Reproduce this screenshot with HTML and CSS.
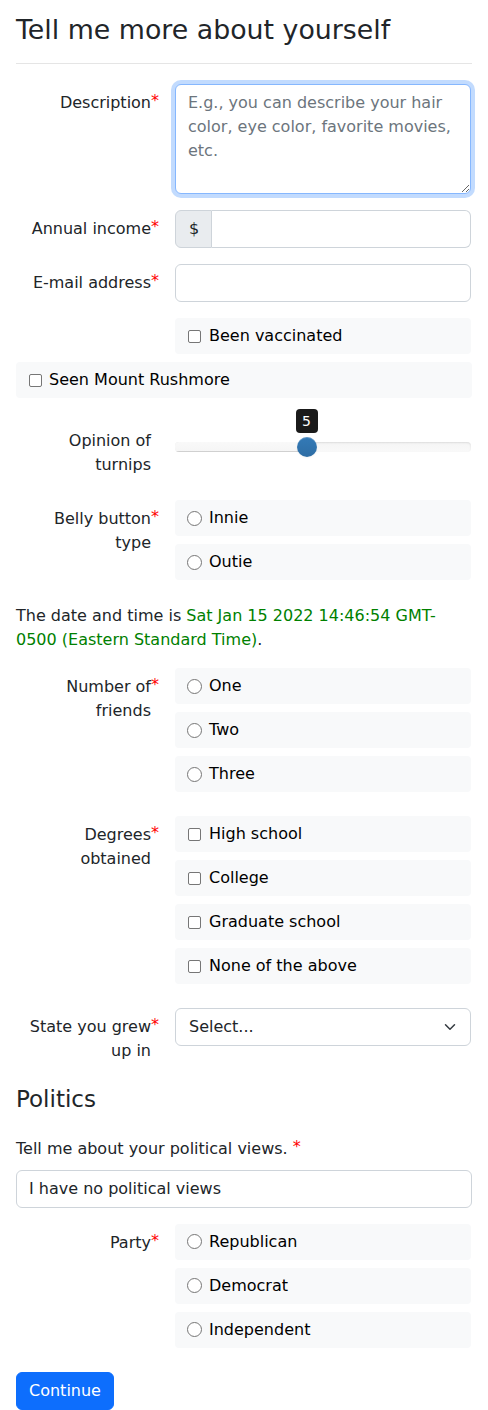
FILE: index.html
```html
<!DOCTYPE html>
<html lang="en">
<head>
<meta charset="utf-8">
<title>Tell me more about yourself</title>
<link rel="stylesheet" href="styles.css">
</head>
<body>
<div class="page">
  <h1 class="title">Tell me more about yourself</h1>
  <hr class="rule">

  <div class="field">
    <label class="flabel">Description<span class="req">*</span></label>
    <div class="fctl">
      <textarea class="textarea" placeholder="E.g., you can describe your hair color, eye color, favorite movies, etc."></textarea>
    </div>
  </div>

  <div class="field">
    <label class="flabel">Annual income<span class="req">*</span></label>
    <div class="fctl">
      <div class="igroup"><span class="iaddon">$</span><input class="input input-grp" type="text"></div>
    </div>
  </div>

  <div class="field">
    <label class="flabel">E-mail address<span class="req">*</span></label>
    <div class="fctl"><input class="input" type="text"></div>
  </div>

  <div class="field field-tight">
    <div class="flabel flabel-empty"></div>
    <div class="fctl">
      <label class="choice"><input class="cb" type="checkbox"><span>Been vaccinated</span></label>
    </div>
  </div>

  <div class="wide">
    <label class="choice"><input class="cb" type="checkbox"><span>Seen Mount Rushmore</span></label>
  </div>

  <div class="field">
    <label class="flabel">Opinion of turnips</label>
    <div class="fctl">
      <div class="slider">
        <div class="track"><div class="selection"></div></div>
        <div class="handle"></div>
        <div class="tip">5</div>
      </div>
    </div>
  </div>

  <div class="field">
    <label class="flabel">Belly button<span class="req">*</span> type</label>
    <div class="fctl">
      <label class="choice"><input class="rd" type="radio" name="belly"><span>Innie</span></label>
      <label class="choice"><input class="rd" type="radio" name="belly"><span>Outie</span></label>
    </div>
  </div>

  <p class="note">The date and time is <span class="green">Sat Jan 15 2022 14:46:54 GMT-0500 (Eastern Standard Time)</span>.</p>

  <div class="field">
    <label class="flabel">Number of<span class="req">*</span> friends</label>
    <div class="fctl">
      <label class="choice"><input class="rd" type="radio" name="friends"><span>One</span></label>
      <label class="choice"><input class="rd" type="radio" name="friends"><span>Two</span></label>
      <label class="choice"><input class="rd" type="radio" name="friends"><span>Three</span></label>
    </div>
  </div>

  <div class="field">
    <label class="flabel">Degrees<span class="req">*</span> obtained</label>
    <div class="fctl">
      <label class="choice"><input class="cb" type="checkbox"><span>High school</span></label>
      <label class="choice"><input class="cb" type="checkbox"><span>College</span></label>
      <label class="choice"><input class="cb" type="checkbox"><span>Graduate school</span></label>
      <label class="choice"><input class="cb" type="checkbox"><span>None of the above</span></label>
    </div>
  </div>

  <div class="field">
    <label class="flabel">State you grew<span class="req">*</span> up in</label>
    <div class="fctl">
      <div class="select"><span>Select...</span>
        <svg class="chev" width="12" height="12" viewBox="0 0 16 16"><path d="M2 5l6 6 6-6" fill="none" stroke="#343a40" stroke-width="2" stroke-linecap="round" stroke-linejoin="round"/></svg>
      </div>
    </div>
  </div>

  <h2 class="subhead">Politics</h2>
  <label class="toplabel">Tell me about your political views. <span class="req2">*</span></label>
  <input class="input input-full" type="text" value="I have no political views">

  <div class="field">
    <label class="flabel">Party<span class="req">*</span></label>
    <div class="fctl">
      <label class="choice"><input class="rd" type="radio" name="party"><span>Republican</span></label>
      <label class="choice"><input class="rd" type="radio" name="party"><span>Democrat</span></label>
      <label class="choice"><input class="rd" type="radio" name="party"><span>Independent</span></label>
    </div>
  </div>

  <button class="btn" type="button">Continue</button>
</div>
</body>
</html>
```

FILE: styles.css
```css
* { box-sizing: border-box; }
html, body { margin: 0; padding: 0; background: #fff; }
body {
  font-family: "DejaVu Sans", sans-serif;
  font-size: 16px;
  line-height: 24px;
  color: #212529;
}
.page { padding: 14px 16px 0 16px; width: 488px; }

.title {
  font-size: 26.8px;
  font-weight: 400;
  line-height: 1.2;
  margin: 0;
}
.rule {
  margin: 17px 0 20px 0;
  border: 0;
  border-top: 1px solid #e5e5e5;
  height: 0;
}

.field {
  display: grid;
  grid-template-columns: 135px 296px;
  column-gap: 24px;
  margin-bottom: 16px;
}
.field-tight { margin-bottom: 0; }
.flabel {
  display: block;
  text-align: right;
  padding: 7px 0;
  line-height: 24px;
}
.flabel-empty { padding: 0; }
.req {
  color: #ff0000;
  display: inline-block;
  width: 7px;
  margin-right: -7px;
  text-align: left;
  vertical-align: 2px;
  line-height: 1;
}
.req2 {
  color: #ff0000;
  vertical-align: 2px;
  line-height: 1;
}

.textarea {
  display: block;
  width: 296px;
  height: 110px;
  margin: 0;
  padding: 6px 12px;
  font: inherit;
  line-height: 24px;
  color: #212529;
  border: 1px solid #86b7fe;
  border-radius: 6px;
  box-shadow: 0 0 0 4px rgba(13,110,253,.25);
  resize: vertical;
  outline: none;
}
.textarea::placeholder { color: #6c757d; opacity: 1; }

.input {
  display: block;
  width: 100%;
  height: 38px;
  margin: 0;
  padding: 6px 12px;
  font: inherit;
  line-height: 24px;
  color: #212529;
  background: #fff;
  border: 1px solid #ced4da;
  border-radius: 6px;
  outline: none;
}
.igroup { display: flex; }
.iaddon {
  width: 37px;
  height: 38px;
  padding: 6px 0 6px 13px;
  background: #e9ecef;
  border: 1px solid #ced4da;
  border-radius: 6px 0 0 6px;
  color: #212529;
}
.input-grp {
  flex: 1;
  width: auto;
  border-left: 0;
  border-radius: 0 6px 6px 0;
}
.input-full { width: 456px; margin-bottom: 16px; }

.choice {
  display: flex;
  align-items: center;
  gap: 8px;
  height: 36px;
  margin-bottom: 8px;
  padding-left: 13px;
  background: #f8f9fa;
  border-radius: 4px;
  color: #000;
}
.wide { padding-bottom: 16px; }
.wide .choice { width: 456px; gap: 7px; }

.cb, .rd {
  appearance: none;
  -webkit-appearance: none;
  margin: 0;
  flex: none;
  background: #fff;
}
.cb {
  width: 13px;
  height: 13px;
  border: 1px solid #767676;
  border-radius: 2px;
}
.rd {
  width: 15px;
  height: 15px;
  margin-left: -1px;
  margin-right: -1px;
  border: 1.5px solid #767676;
  border-radius: 50%;
}

.slider {
  position: relative;
  height: 20px;
  margin-top: 15px;
}
.track {
  position: absolute;
  left: 0;
  right: 0;
  top: 5px;
  height: 10px;
  border-radius: 4px;
  background: linear-gradient(#f5f5f5, #f9f9f9);
  box-shadow: inset 0 1px 2px rgba(0,0,0,.1);
  overflow: hidden;
}
.selection {
  width: 44.44%;
  height: 100%;
  background: linear-gradient(#f9f9f9, #f5f5f5);
  box-shadow: inset 0 -1px 0 rgba(0,0,0,.15);
}
.handle {
  position: absolute;
  top: 0;
  left: calc(44.44% - 10px);
  width: 20px;
  height: 20px;
  border-radius: 50%;
  background: linear-gradient(#337ab7, #2e6da4);
  box-shadow: inset 0 1px 0 rgba(255,255,255,.2), 0 1px 2px rgba(0,0,0,.05);
}
.tip {
  position: absolute;
  top: -28px;
  left: calc(44.44% - 11px);
  width: 22px;
  height: 24px;
  line-height: 24px;
  text-align: center;
  font-size: 14px;
  color: #fff;
  background: #1a1a1a;
  border-radius: 4px;
}

.note { margin: 0 0 16px 0; }
.green { color: #008000; }

.select {
  display: flex;
  align-items: center;
  justify-content: space-between;
  height: 38px;
  padding: 6px 14px 6px 13px;
  border: 1px solid #ced4da;
  border-radius: 6px;
  background: #fff;
}
.chev { display: block; }

.subhead {
  font-size: 23px;
  font-weight: 400;
  line-height: 1.2;
  margin: 0 0 23px 0;
}
.toplabel { display: block; margin-bottom: 9px; }

.btn {
  display: block;
  height: 38px;
  padding: 6px 12px;
  font: inherit;
  line-height: 24px;
  color: #fff;
  background: #0d6efd;
  border: 1px solid #0d6efd;
  border-radius: 6px;
}
```
